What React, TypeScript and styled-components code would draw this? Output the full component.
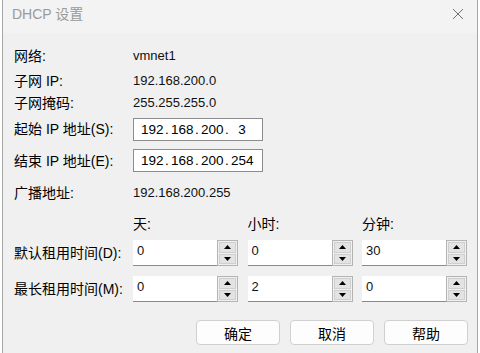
import styled, { createGlobalStyle } from 'styled-components';

const GlobalStyle = createGlobalStyle`
  html, body {
    margin: 0;
    padding: 0;
    background: #ffffff;
  }
  body {
    font-family: "Liberation Sans", "Noto Sans CJK SC", sans-serif;
    color: #000;
  }
`;

const Window = styled.div`
  box-sizing: border-box;
  margin-left: 2px;
  width: 476px;
  height: 353px;
  background: #f0f0f0;
  border-left: 1px solid #a6a6a6;
  border-right: 1px solid #a6a6a6;
  display: flex;
  flex-direction: column;
  overflow: hidden;
`;

const TitleBar = styled.div`
  height: 33px;
  flex: none;
  background: #f3f3f3;
  display: flex;
  align-items: center;
  justify-content: space-between;
  padding: 0 13px 0 9px;
`;

const Title = styled.span`
  font-size: 14px;
  color: #9a9a9a;
  line-height: 20px;
  margin-top: -6px;
`;

const CloseIcon = () => (
  <svg width="12" height="12" viewBox="0 0 12 12" style={{ marginTop: -6 }}>
    <path d="M1 1 L11 11 M11 1 L1 11" stroke="#707070" strokeWidth="1" fill="none" />
  </svg>
);

const Body = styled.div`
  padding: 8px 9px 0 11px;
  display: flex;
  flex-direction: column;
`;

const InfoGrid = styled.div`
  display: grid;
  grid-template-columns: 119px 1fr;
  grid-template-rows: 24px 25px 20px 38px 25px 33px;
  align-items: center;
`;

const Label = styled.span<{ $shift?: number }>`
  font-size: 14px;
  line-height: 18px;
  white-space: nowrap;
  padding-top: ${(p) => (p.$shift ?? 0) * 2}px;
`;

const Value = styled.span`
  font-size: 13px;
  line-height: 18px;
  color: #111;
  padding-top: 6px;
`;

const IpField = styled.div`
  box-sizing: border-box;
  width: 130px;
  height: 23px;
  background: #fff;
  border: 1px solid #8c8c8c;
  display: flex;
  align-items: center;
  padding-left: 7px;
  font-size: 13.5px;
  color: #000;
`;

const Octet = styled.span`
  width: 22px;
  text-align: center;
`;

const Dot = styled.span`
  width: 8px;
  text-align: center;
`;

const IpBox = ({ octets }: { octets: string[] }) => (
  <IpField>
    {octets.map((o, i) => (
      <span key={i} style={{ display: 'contents' }}>
        {i > 0 && <Dot>.</Dot>}
        <Octet>{o}</Octet>
      </span>
    ))}
  </IpField>
);

const LeaseRow = styled.div<{ $top: number; $height: number }>`
  display: grid;
  grid-template-columns: 109.5px repeat(3, 105px);
  column-gap: 9.5px;
  height: ${(p) => p.$height}px;
  margin-top: ${(p) => p.$top}px;
  align-items: center;
`;

const Spinner = styled.div`
  display: flex;
  height: 26px;
`;

const SpinInput = styled.div`
  box-sizing: border-box;
  width: 85px;
  height: 26px;
  background: #fff;
  border-bottom: 1px solid #8a8a8a;
  font-size: 13px;
  line-height: 21px;
  padding-left: 4px;
  color: #111;
`;

const SpinButtons = styled.div`
  box-sizing: border-box;
  width: 21px;
  height: 26px;
  border: 1px solid #b4b4b4;
  background: #f0f0f0;
  display: flex;
  flex-direction: column;
  gap: 1px;
  padding: 1px;
`;

const SpinButton = styled.div`
  flex: 1;
  background: #e3e3e3;
  border: 1px solid #cfcfcf;
  display: flex;
  align-items: center;
  justify-content: center;
`;

const Arrow = ({ up }: { up?: boolean }) => (
  <svg width="7" height="4" viewBox="0 0 7 4">
    <path d={up ? 'M0 4 L3.5 0 L7 4 Z' : 'M0 0 L7 0 L3.5 4 Z'} fill="#000" />
  </svg>
);

const SpinBox = ({ value }: { value: string }) => (
  <Spinner>
    <SpinInput>{value}</SpinInput>
    <SpinButtons>
      <SpinButton>
        <Arrow up />
      </SpinButton>
      <SpinButton>
        <Arrow />
      </SpinButton>
    </SpinButtons>
  </Spinner>
);

const Footer = styled.div`
  display: flex;
  justify-content: flex-end;
  gap: 10px;
  margin-top: 18px;
`;

const Button = styled.button`
  box-sizing: border-box;
  width: 84px;
  height: 25px;
  background: #fdfdfd;
  border: 1px solid #d0d0d0;
  border-radius: 4px;
  font-family: "Liberation Sans", "Noto Sans CJK SC", sans-serif;
  font-size: 14px;
  color: #000;
  padding: 0;
`;

export default function App() {
  return (
    <>
      <GlobalStyle />
      <Window>
        <TitleBar>
          <Title>DHCP 设置</Title>
          <CloseIcon />
        </TitleBar>
        <Body>
          <InfoGrid>
            <Label $shift={3}>网络:</Label>
            <Value>vmnet1</Value>
            <Label $shift={3}>子网 IP:</Label>
            <Value>192.168.200.0</Value>
            <Label $shift={3}>子网掩码:</Label>
            <Value>255.255.255.0</Value>
            <Label>起始 IP 地址(S):</Label>
            <IpBox octets={['192', '168', '200', '3']} />
            <Label>结束 IP 地址(E):</Label>
            <IpBox octets={['192', '168', '200', '254']} />
            <Label $shift={3}>广播地址:</Label>
            <Value>192.168.200.255</Value>
          </InfoGrid>

          <LeaseRow $top={7} $height={22}>
            <span />
            <Label>天:</Label>
            <Label>小时:</Label>
            <Label>分钟:</Label>
          </LeaseRow>
          <LeaseRow $top={5} $height={26}>
            <Label>默认租用时间(D):</Label>
            <SpinBox value="0" />
            <SpinBox value="0" />
            <SpinBox value="30" />
          </LeaseRow>
          <LeaseRow $top={10} $height={26}>
            <Label>最长租用时间(M):</Label>
            <SpinBox value="0" />
            <SpinBox value="2" />
            <SpinBox value="0" />
          </LeaseRow>

          <Footer>
            <Button>确定</Button>
            <Button>取消</Button>
            <Button>帮助</Button>
          </Footer>
        </Body>
      </Window>
    </>
  );
}
